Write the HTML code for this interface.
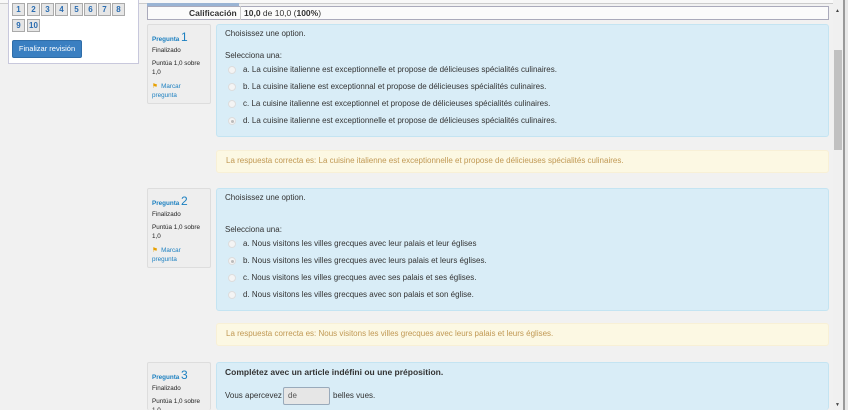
<!DOCTYPE html>
<html style="overflow:hidden;width:848px;height:410px"><head><meta charset="utf-8"><style>
*{margin:0;padding:0;box-sizing:border-box}
body{width:848px;height:410px;overflow:hidden;background:#f1f1f1;font-family:"Liberation Sans",sans-serif;position:relative;color:#333}
.a{position:absolute}
.t{font-size:8px;letter-spacing:0;white-space:nowrap}
.nb{position:absolute;width:13px;height:13px;background:#e6e6e6;border:1px solid #aaa;font-size:8px;font-weight:bold;color:#2a6cb0;text-align:center;line-height:11px}
.info{position:absolute;left:147px;width:64px;background:#eee;border:1px solid #ddd;border-radius:2px;font-size:6.3px;color:#222;padding:5px 4px}
.info .p{color:#1a7fc0;font-weight:bold}
.info .p b{font-size:12px;font-weight:normal}
.cont{position:absolute;left:216px;width:613px;background:#d9edf7;border:1px solid #c4e4f2;border-radius:3px}
.fb{position:absolute;left:216px;width:613px;height:23px;background:#fcf8e3;border:1px solid #f8f0d6;border-radius:3px;color:#c09853;font-size:8px;padding:5px 0 0 9px;white-space:nowrap}
.r{position:absolute;width:8px;height:8px;border-radius:50%;background:#f4f4f4;border:1px solid #ddd}
.r.s::after{content:"";position:absolute;left:1.5px;top:1.5px;width:3px;height:3px;border-radius:50%;background:#bbb}
.mk{margin-top:5px;color:#1a7fc0;line-height:9px;width:44px}
</style></head><body>
<div class="a" style="left:0;top:0;width:833px;height:4px;background:#f8f8f8;border-bottom:1px solid #ccc"></div>
<div class="a" style="left:8px;top:0;width:131px;height:64px;background:#fff;border:1px solid #c8c8dc;border-top:none"></div>
<div class="nb" style="left:12px;top:3px">1</div><div class="nb" style="left:27px;top:3px">2</div><div class="nb" style="left:41px;top:3px">3</div><div class="nb" style="left:55px;top:3px">4</div><div class="nb" style="left:70px;top:3px">5</div><div class="nb" style="left:84px;top:3px">6</div><div class="nb" style="left:98px;top:3px">7</div><div class="nb" style="left:112px;top:3px">8</div>
<div class="nb" style="left:12px;top:19px">9</div><div class="nb" style="left:27px;top:19px">10</div>
<div class="a" style="left:12px;top:40px;width:70px;height:18px;background:#3a7fc1;border:1px solid #2f6da8;border-radius:2px;color:#fff;font-size:7.5px;text-align:center;line-height:16px">Finalizar revisión</div>
<div class="a" style="left:147px;top:3px;width:92px;height:3px;background:#9ab4d4"></div>
<div class="a" style="left:147px;top:6px;width:682px;height:14px;background:#fbfbfb;border:1px solid #aab"></div>
<div class="a t" style="left:189px;top:8px;font-weight:bold;font-size:8.5px">Calificación</div>
<div class="a" style="left:240px;top:6px;width:1px;height:14px;background:#ccc"></div>
<div class="a t" style="left:244px;top:8px;font-size:8.5px"><b>10,0</b> de 10,0 (<b>100%</b>)</div>

<!-- Q1 -->
<div class="info" style="top:24px;height:80px"><div class="p">Pregunta <b>1</b></div><div style="margin-top:3px">Finalizado</div><div style="margin-top:5px;line-height:9px">Puntúa 1,0 sobre 1,0</div><div class="mk"><span style="color:#e8a000">⚑</span>&nbsp; Marcar pregunta</div></div>
<div class="cont" style="top:24px;height:113px"></div>
<div class="a t" style="left:225px;top:29px">Choisissez une option.</div>
<div class="a t" style="left:225px;top:51px">Selecciona una:</div>
<div class="r" style="left:228px;top:66px"></div><div class="a t" style="left:243px;top:65px">a. La cuisine italienne est exceptionnelle et propose de délicieuses spécialités culinaires.</div>
<div class="r" style="left:228px;top:83px"></div><div class="a t" style="left:243px;top:82px">b. La cuisine italiene est exceptionnal et propose de délicieuses spécialités culinaires.</div>
<div class="r" style="left:228px;top:100px"></div><div class="a t" style="left:243px;top:99px">c. La cuisine italienne est exceptionnel et propose de délicieuses spécialités culinaires.</div>
<div class="r s" style="left:228px;top:117px"></div><div class="a t" style="left:243px;top:116px">d. La cuisine italienne est exceptionnelle et propose de délicieuses spécialités culinaires.</div>
<div class="fb" style="top:150px">La respuesta correcta es: La cuisine italienne est exceptionnelle et propose de délicieuses spécialités culinaires.</div>

<!-- Q2 -->
<div class="info" style="top:188px;height:80px"><div class="p">Pregunta <b>2</b></div><div style="margin-top:3px">Finalizado</div><div style="margin-top:5px;line-height:9px">Puntúa 1,0 sobre 1,0</div><div class="mk"><span style="color:#e8a000">⚑</span>&nbsp; Marcar pregunta</div></div>
<div class="cont" style="top:188px;height:123px"></div>
<div class="a t" style="left:225px;top:193px">Choisissez une option.</div>
<div class="a t" style="left:225px;top:225px">Selecciona una:</div>
<div class="r" style="left:228px;top:240px"></div><div class="a t" style="left:243px;top:239px">a. Nous visitons les villes grecques avec leur palais et leur églises</div>
<div class="r s" style="left:228px;top:257px"></div><div class="a t" style="left:243px;top:256px">b. Nous visitons les villes grecques avec leurs palais et leurs églises.</div>
<div class="r" style="left:228px;top:274px"></div><div class="a t" style="left:243px;top:273px">c. Nous visitons les villes grecques avec ses palais et ses églises.</div>
<div class="r" style="left:228px;top:291px"></div><div class="a t" style="left:243px;top:290px">d. Nous visitons les villes grecques avec son palais et son église.</div>
<div class="fb" style="top:323px">La respuesta correcta es: Nous visitons les villes grecques avec leurs palais et leurs églises.</div>

<!-- Q3 -->
<div class="info" style="top:362px;height:48px;border-bottom:none"><div class="p">Pregunta <b>3</b></div><div style="margin-top:3px">Finalizado</div><div style="margin-top:5px;line-height:9px">Puntúa 1,0 sobre 1,0</div></div>
<div class="cont" style="top:362px;height:48px;border-bottom:none"></div>
<div class="a t" style="left:225px;top:367px;font-weight:bold;font-size:8.5px">Complétez avec un article indéfini ou une préposition.</div>
<div class="a t" style="left:225px;top:391px">Vous apercevez</div>
<div class="a" style="left:283px;top:387px;width:47px;height:18px;background:#e6e6e6;border:1px solid #9ab;border-radius:2px;font-size:8px;color:#555;padding:3px 0 0 4px">de</div>
<div class="a t" style="left:333px;top:391px">belles vues.</div>

<!-- scrollbar -->
<div class="a" style="left:833px;top:0;width:10px;height:410px;background:#f0f0f0"></div>
<div class="a" style="left:835px;top:8px;font-size:5px;color:#444">▲</div>
<div class="a" style="left:834px;top:50px;width:8px;height:100px;background:#c1c1c1"></div>
<div class="a" style="left:835px;top:402px;font-size:5px;color:#444">▼</div>
<div class="a" style="left:843px;top:0;width:2px;height:410px;background:#9a9a9a"></div>
<div class="a" style="left:845px;top:0;width:3px;height:410px;background:#e8e8e8"></div>
</body></html>
